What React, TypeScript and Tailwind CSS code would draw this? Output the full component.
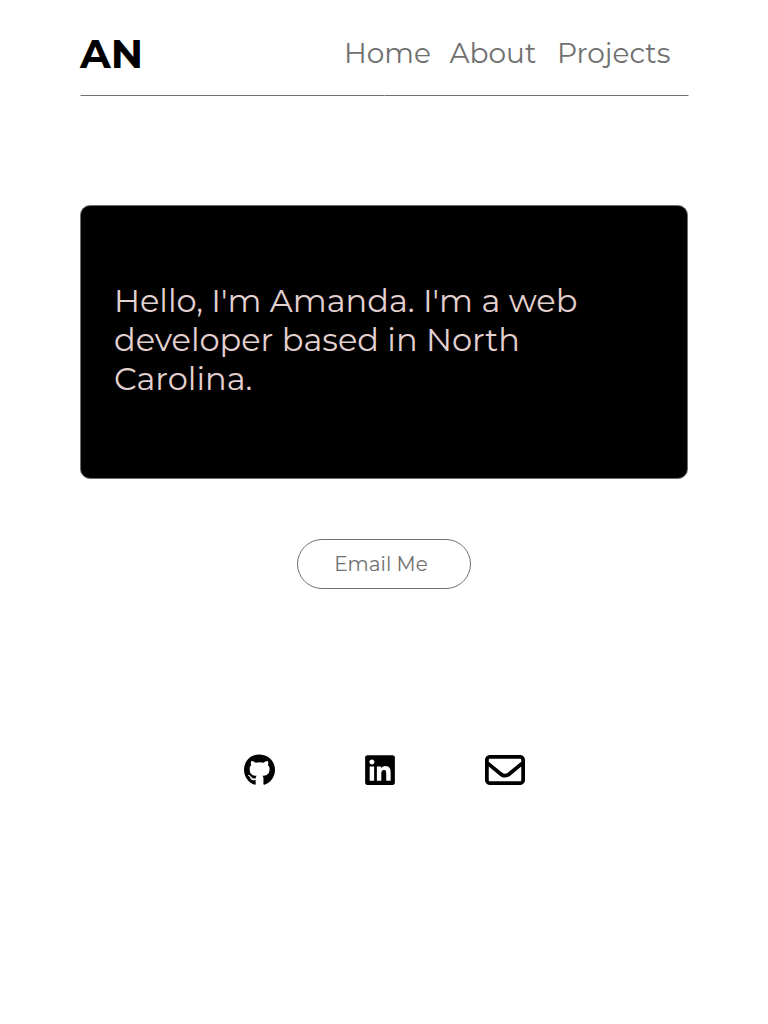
import { FaGithub, FaLinkedin, FaRegEnvelope } from "react-icons/fa6";

export default function App() {
  return (
    <div className="min-h-screen bg-white px-20 font-['Montserrat','Inter',sans-serif] text-[#707070]">
      <header className="flex h-[95px] w-[609px] items-start justify-between pr-[18px]">
        <h1 className="mt-[29px] text-[40px]/[50px] font-bold text-black">AN</h1>
        <nav className="mt-[35px] flex text-[28px]/[36px] font-normal">
          <a className="w-[105.5px] whitespace-nowrap">Home</a>
          <a className="w-[107.5px] whitespace-nowrap">About</a>
          <a className="w-[114px] whitespace-nowrap">Projects</a>
        </nav>
      </header>
      <div className="flex h-px w-[609px]">
        <span className="w-px bg-[#b8b8b8]" />
        <span className="w-[303px] bg-[#707070]" />
        <span className="w-px bg-[#a0a0a0]" />
        <span className="w-[303px] bg-[#707070]" />
        <span className="w-px bg-[#b8b8b8]" />
      </div>
      <main>
        <section className="mt-[109px] flex h-[274px] items-center rounded-[10px] border border-[#707070] bg-black pb-[6px] pl-[33px]">
          <p className="text-[32px]/[39px] font-normal text-[#e3d0d0]">
            <span className="block whitespace-nowrap">Hello, I'm Amanda. I'm a web</span>
            <span className="block whitespace-nowrap">developer based in North</span>
            <span className="block whitespace-nowrap">Carolina.</span>
          </p>
        </section>
        <div className="mt-[60px] flex justify-center">
          <button className="h-[50px] w-[174px] rounded-full border border-[#707070] pr-[6px] text-[20px]/6">Email Me</button>
        </div>
      </main>
      <footer className="mt-[165px] flex h-8 items-center justify-center pl-px text-black">
        <FaGithub className="h-8 w-[31px]" />
        <FaLinkedin className="ml-[90px] h-[34px] w-[30px]" />
        <FaRegEnvelope className="ml-[90px] size-10" />
      </footer>
    </div>
  );
}
